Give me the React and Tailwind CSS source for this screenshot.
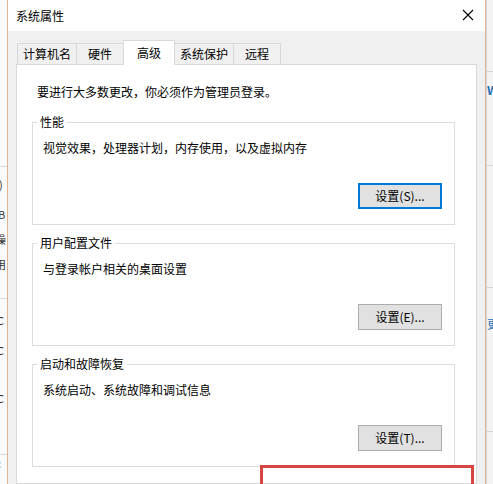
import React from "react";

const font = { fontFamily: '"Noto Sans CJK SC", "Noto Sans", sans-serif' };

function Btn({ label, focused }) {
  return (
    <button
      className={
        focused
          ? "w-[84px] h-[26px] border-2 border-[#0078d7] bg-[#e1e1e1] text-[12px] leading-[16px] text-black"
          : "w-[84px] h-[26px] border border-[#adadad] bg-[#e1e1e1] text-[12px] leading-[16px] text-black"
      }
    >
      {label}
    </button>
  );
}

function Group({ title, text, btn, focused, last }) {
  return (
    <fieldset
      className={
        "w-[423px] ml-[15px] border border-[#dcdcdc] pb-[15px] " +
        (last ? "" : "mb-[10px]")
      }
    >
      <legend className="ml-[4px] px-[3px] text-[12px] leading-[16px] text-black">
        {title}
      </legend>
      <div className="pl-[10px] pt-[9px] text-[12px] leading-[17px] text-black">
        {text}
      </div>
      <div className="flex justify-end pr-[12px] mt-[27px]">
        <Btn label={btn} focused={focused} />
      </div>
    </fieldset>
  );
}

export default function App() {
  return (
    <div
      className="w-[493px] h-[484px] overflow-hidden flex relative bg-white"
      style={font}
    >
      {/* left background window fragment */}
      <div className="w-[7px] h-full bg-[#fafafa] overflow-hidden flex flex-col text-[11px] leading-[14px] text-[#333]">
        <div className="h-[167px] shrink-0 border-b border-[#dadada]"></div>
        <div className="pt-[10px] -ml-[1px]">)</div>
        <div className="pt-[16px] -ml-[2px]">B</div>
        <div className="pt-[11px] -ml-[5px]">操</div>
        <div className="pt-[11px] -ml-[5px]">用</div>
        <div className="h-[28px] shrink-0 border-b border-[#dadada]"></div>
        <div className="pt-[14px] -ml-[3px]">C</div>
        <div className="pt-[16px] -ml-[3px]">C</div>
        <div className="pt-[34px] -ml-[3px]">C</div>
        <div className="h-[50px] shrink-0 border-b border-[#dadada]"></div>
        <div className="pt-[1px] -ml-[2px]">:</div>
      </div>

      {/* dialog */}
      <div className="w-[479px] h-full border-x border-[#e2b48e] flex flex-col bg-[#f0f0f0]">
        <div className="h-[31px] bg-white flex items-center justify-between pl-[8px] pr-[8px] shrink-0">
          <span className="text-[12px] leading-[16px] text-black">系统属性</span>
          <svg width="12" height="12" viewBox="0 0 12 12" className="mr-[3px] mb-[1px]">
            <path d="M1 1 L11 11 M11 1 L1 11" stroke="#000" strokeWidth="1.1" fill="none" />
          </svg>
        </div>

        <div className="flex-1 pt-[9px] px-[8px] flex flex-col min-h-0">
          {/* tabs */}
          <div className="flex items-end pl-[1px] h-[24px] text-[12px] leading-[16px] text-black">
            <div className="w-[59px] h-[21px] border-l border-t border-[#d9d9d9] flex items-center justify-center">
              计算机名
            </div>
            <div className="w-[47px] h-[21px] border-l border-t border-[#d9d9d9] flex items-center justify-center">
              硬件
            </div>
            <div className="relative z-10 w-[52px] h-[25px] -mb-[1px] border-l border-t border-r border-[#d9d9d9] bg-white flex items-center justify-center">
              高级
            </div>
            <div className="w-[58px] h-[21px] border-t border-[#d9d9d9] flex items-center justify-center">
              系统保护
            </div>
            <div className="w-[48px] h-[21px] border-l border-t border-r border-[#d9d9d9] flex items-center justify-center">
              远程
            </div>
          </div>

          {/* panel */}
          <div className="flex-1 bg-white border border-[#d9d9d9] pt-[18px]">
            <div className="pl-[20px] text-[12px] leading-[17px] text-black">
              要进行大多数更改，你必须作为管理员登录。
            </div>
            <div className="mt-[14px]">
              <Group
                title="性能"
                text="视觉效果，处理器计划，内存使用，以及虚拟内存"
                btn="设置(S)..."
                focused
              />
              <Group
                title="用户配置文件"
                text="与登录帐户相关的桌面设置"
                btn="设置(E)..."
              />
              <Group
                title="启动和故障恢复"
                text="系统启动、系统故障和调试信息"
                btn="设置(T)..."
                last
              />
            </div>
          </div>
        </div>
      </div>

      {/* right background window fragment */}
      <div className="w-[7px] h-full bg-[#f3f3f3] border-l border-[#d3d6da] overflow-hidden flex flex-col text-[12px] leading-[16px]">
        <div className="h-[72px] shrink-0 border-b border-[#d6d6d6]"></div>
        <div className="pt-[10px] text-[#1e6fb8] font-bold">W</div>
        <div className="h-[68px] shrink-0 border-b border-[#d6d6d6]"></div>
        <div className="h-[122px] shrink-0 border-b border-[#d6d6d6]"></div>
        <div className="pt-[28px] text-[#1e6fb8]">更</div>
        <div className="h-[100px] shrink-0 border-b border-[#d6d6d6]"></div>
      </div>

      {/* red annotation box */}
      <div className="absolute left-[260px] top-[465px] w-[214px] h-[40px] border-[3px] border-[#d4463f]"></div>
    </div>
  );
}
